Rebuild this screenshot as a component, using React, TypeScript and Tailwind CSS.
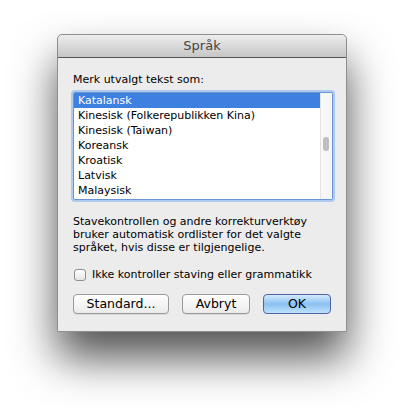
import React, { useState } from 'react';

const languages = [
  'Katalansk',
  'Kinesisk (Folkerepublikken Kina)',
  'Kinesisk (Taiwan)',
  'Koreansk',
  'Kroatisk',
  'Latvisk',
  'Malaysisk',
];

function App() {
  const [selected, setSelected] = useState(0);
  const [noCheck, setNoCheck] = useState(false);

  return (
    <div
      className="w-[404px] h-[411px] bg-white pt-[34px] pl-[57px]"
      style={{ fontFamily: '"DejaVu Sans", "Noto Sans", sans-serif' }}
    >
      <div className="w-[290px] h-[298px] flex flex-col rounded-t-[5px] bg-[#ececec] border border-[#8e8e8e] shadow-[0_26px_44px_rgba(0,0,0,0.68)]">
        {/* title bar */}
        <div className="h-[23px] shrink-0 flex items-center justify-center rounded-t-[5px] bg-gradient-to-b from-[#ededed] to-[#c6c6c6] border-b border-[#555] text-[13px] text-[#444]">
          Språk
        </div>

        <div className="flex flex-col px-[15px] pt-[15px]">
          <div className="h-[14px] text-[11px] leading-[14px] text-black">Merk utvalgt tekst som:</div>

          {/* list */}
          <div className="mt-[5px] h-[108px] w-[260px] rounded-[2px] border border-[#6b95d2] shadow-[0_0_0_2px_#aecaf0] bg-white flex overflow-hidden">
            <div className="flex-1">
              {languages.map((lang, i) => (
                <div
                  key={lang}
                  onClick={() => setSelected(i)}
                  className={
                    i === selected
                      ? 'h-[15px] pl-[4px] text-[11px] leading-[15px] bg-[#3d80df] text-white'
                      : 'h-[15px] pl-[4px] text-[11px] leading-[15px] text-black'
                  }
                >
                  {lang}
                </div>
              ))}
            </div>
            <div className="w-[12px] shrink-0 bg-[#f7f7f7] border-l border-[#e4e4e4] relative">
              <div className="absolute left-[2px] top-[44px] w-[6px] h-[14px] rounded-full bg-[#c0c0c0]" />
            </div>
          </div>

          <p className="mt-[15px] w-[250px] text-[11px] leading-[13px] text-black">
            Stavekontrollen og andre korrekturverktøy bruker automatisk ordlister for det valgte språket, hvis disse er tilgjengelige.
          </p>

          <label className="mt-[14px] h-[14px] flex items-center gap-[6px] text-[11px] leading-[14px] text-black">
            <input
              type="checkbox"
              checked={noCheck}
              onChange={() => setNoCheck(!noCheck)}
              className="appearance-none w-[12px] h-[12px] ml-[1px] rounded-[3px] border border-[#8f8f8f] bg-gradient-to-b from-white to-[#e4e4e4] checked:bg-[#3d80df]"
            />
            Ikke kontroller staving eller grammatikk
          </label>

          <div className="mt-[12px] flex items-center">
            <button className="w-[96px] h-[20px] rounded-[4px] border border-[#9a9a9a] bg-gradient-to-b from-white to-[#ebebeb] text-[12.5px] leading-[18px] text-black shadow-[0_1px_0_rgba(0,0,0,0.08)]">
              Standard...
            </button>
            <button className="ml-[13px] w-[68px] h-[20px] rounded-[4px] border border-[#9a9a9a] bg-gradient-to-b from-white to-[#ebebeb] text-[12.5px] leading-[18px] text-black shadow-[0_1px_0_rgba(0,0,0,0.08)]">
              Avbryt
            </button>
            <button className="ml-[13px] w-[68px] h-[20px] rounded-[4px] border border-[#4f65a6] bg-gradient-to-b from-[#d3e9fc] via-[#8cc1f2] to-[#bde2fd] text-[12.5px] leading-[18px] text-black">
              OK
            </button>
          </div>
        </div>
      </div>
    </div>
  );
}

export default App;
